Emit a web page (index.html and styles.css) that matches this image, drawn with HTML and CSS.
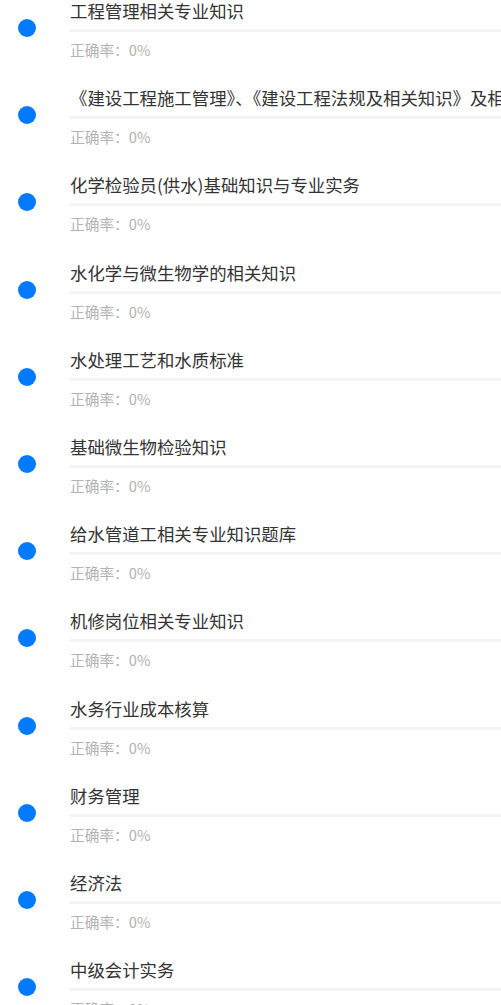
FILE: index.html
```html
<!DOCTYPE html>
<html lang="zh-CN">
<head>
  <meta charset="UTF-8" />
  <meta name="viewport" content="width=device-width, initial-scale=1.0"/>
  <title>题库列表</title>
  <link rel="stylesheet" href="styles.css">
</head>
<body>

  <ul class="bank-list">
    <li class="bank-item">
      <span class="dot"></span>
      <div class="info">
        <p class="name">工程管理相关专业知识</p>
        <div class="progress"></div>
        <p class="rate">正确率：0%</p>
      </div>
    </li>
    <li class="bank-item">
      <span class="dot"></span>
      <div class="info">
        <p class="name">《建设工程施工管理》、《建设工程法规及相关知识》及相关专业知识</p>
        <div class="progress"></div>
        <p class="rate">正确率：0%</p>
      </div>
    </li>
    <li class="bank-item">
      <span class="dot"></span>
      <div class="info">
        <p class="name">化学检验员(供水)基础知识与专业实务</p>
        <div class="progress"></div>
        <p class="rate">正确率：0%</p>
      </div>
    </li>
    <li class="bank-item">
      <span class="dot"></span>
      <div class="info">
        <p class="name">水化学与微生物学的相关知识</p>
        <div class="progress"></div>
        <p class="rate">正确率：0%</p>
      </div>
    </li>
    <li class="bank-item">
      <span class="dot"></span>
      <div class="info">
        <p class="name">水处理工艺和水质标准</p>
        <div class="progress"></div>
        <p class="rate">正确率：0%</p>
      </div>
    </li>
    <li class="bank-item">
      <span class="dot"></span>
      <div class="info">
        <p class="name">基础微生物检验知识</p>
        <div class="progress"></div>
        <p class="rate">正确率：0%</p>
      </div>
    </li>
    <li class="bank-item">
      <span class="dot"></span>
      <div class="info">
        <p class="name">给水管道工相关专业知识题库</p>
        <div class="progress"></div>
        <p class="rate">正确率：0%</p>
      </div>
    </li>
    <li class="bank-item">
      <span class="dot"></span>
      <div class="info">
        <p class="name">机修岗位相关专业知识</p>
        <div class="progress"></div>
        <p class="rate">正确率：0%</p>
      </div>
    </li>
    <li class="bank-item">
      <span class="dot"></span>
      <div class="info">
        <p class="name">水务行业成本核算</p>
        <div class="progress"></div>
        <p class="rate">正确率：0%</p>
      </div>
    </li>
    <li class="bank-item">
      <span class="dot"></span>
      <div class="info">
        <p class="name">财务管理</p>
        <div class="progress"></div>
        <p class="rate">正确率：0%</p>
      </div>
    </li>
    <li class="bank-item">
      <span class="dot"></span>
      <div class="info">
        <p class="name">经济法</p>
        <div class="progress"></div>
        <p class="rate">正确率：0%</p>
      </div>
    </li>
    <li class="bank-item">
      <span class="dot"></span>
      <div class="info">
        <p class="name">中级会计实务</p>
        <div class="progress"></div>
        <p class="rate">正确率：0%</p>
      </div>
    </li>
  </ul>

</body>
</html>
```

FILE: styles.css
```css
html, body {
  height: 100%;
  overflow: hidden;
}
body {
  margin: 0;
  background: #fff;
  font-family: "Noto Sans CJK SC", "Noto Sans", sans-serif;
  color: #333;
}
.bank-list {
  list-style: none;
  margin: 0;
  padding: 0;
}
.bank-item {
  display: flex;
  height: 87.2px;
}
.dot {
  flex: none;
  width: 18px;
  height: 18px;
  margin: 19px 34px 0 18px;
  border-radius: 50%;
  background: #007aff;
}
.info {
  flex: 1;
  min-width: 0;
}
.name {
  margin: -1px 0 0;
  font-size: 17.4px;
  line-height: 24px;
  white-space: nowrap;
  overflow: hidden;
}
.progress {
  height: 3px;
  margin-top: 6px;
  background: #f4f4f4;
}
.rate {
  margin: 8px 0 0;
  font-size: 14.7px;
  line-height: 20px;
  color: #b2b2b2;
}
```
